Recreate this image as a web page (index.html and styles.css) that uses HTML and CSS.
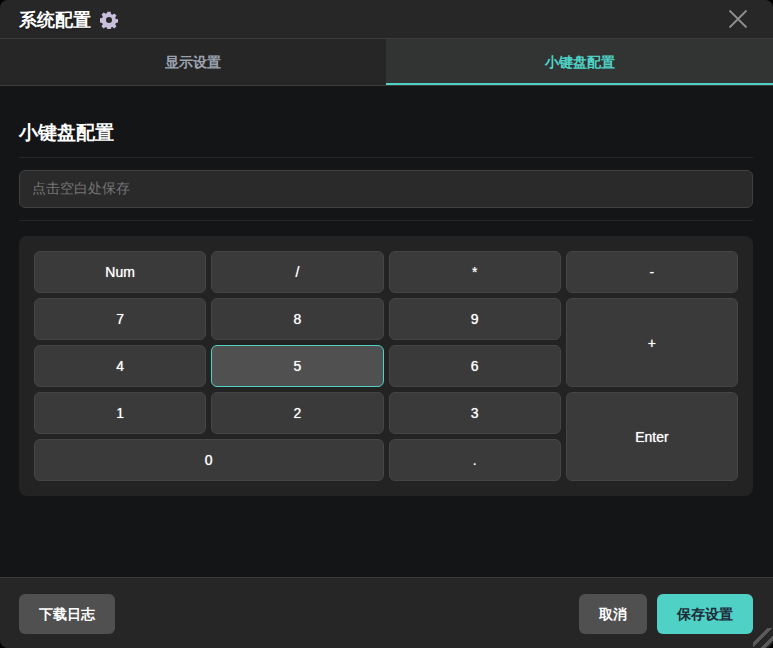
FILE: index.html
```html
<!DOCTYPE html>
<html lang="zh">
<head>
<meta charset="utf-8">
<title>系统配置</title>
<link rel="stylesheet" href="styles.css">
</head>
<body>
<div class="dialog">
  <header class="head">
    <h1 class="title">系统配置
      <svg class="gear" width="18" height="18" viewBox="0 0 18 18"><path fill="#c9bfdc" fill-rule="evenodd" d="M7.4.8h3.2l.4 2.3 1.3.6 2-1.3 2.2 2.2-1.3 2 .6 1.3 2.3.4v3.2l-2.3.4-.6 1.3 1.3 2-2.2 2.2-2-1.3-1.3.6-.4 2.3H7.4l-.4-2.3-1.3-.6-2 1.3-2.2-2.2 1.3-2-.6-1.3-2.3-.4V7.3l2.3-.4.6-1.3-1.3-2 2.2-2.2 2 1.3 1.3-.6zM9 6a3 3 0 1 0 0 6 3 3 0 0 0 0-6z"/></svg>
    </h1>
    <svg class="close" width="20" height="20" viewBox="0 0 20 20"><path d="M1.5 1.5 18.5 18.5M18.5 1.5 1.5 18.5" stroke="#8e8e8e" stroke-width="1.8" fill="none"/></svg>
  </header>
  <nav class="tabs">
    <div class="tab">显示设置</div>
    <div class="tab active">小键盘配置</div>
  </nav>
  <main class="body">
    <h2 class="section">小键盘配置</h2>
    <div class="inputwrap"><input class="input" placeholder="点击空白处保存"></div>
    <div class="pad">
      <button class="key">Num</button>
      <button class="key">/</button>
      <button class="key">*</button>
      <button class="key">-</button>
      <button class="key">7</button>
      <button class="key">8</button>
      <button class="key">9</button>
      <button class="key tall">+</button>
      <button class="key">4</button>
      <button class="key sel">5</button>
      <button class="key">6</button>
      <button class="key">1</button>
      <button class="key">2</button>
      <button class="key">3</button>
      <button class="key tall">Enter</button>
      <button class="key wide">0</button>
      <button class="key">.</button>
    </div>
  </main>
  <footer class="foot">
    <button class="btn">下载日志</button>
    <div class="right">
      <button class="btn cancel">取消</button>
      <button class="btn save">保存设置</button>
    </div>
  </footer>
  <div class="grip"></div>
</div>
</body>
</html>
```
FILE: styles.css
```css
* { box-sizing: border-box; }
html, body { margin: 0; padding: 0; background: #000; }
body { width: 773px; height: 648px; overflow: hidden; font-family: "Liberation Sans", sans-serif; }
.dialog { position: relative; width: 773px; height: 648px; display: flex; flex-direction: column; background: #141517; border-radius: 8px; overflow: hidden; color: #fff; }
.head { height: 39px; flex: none; display: flex; align-items: center; justify-content: space-between; padding: 3px 25px 1px 19px; background: #272727; border-bottom: 1px solid #3c3c3c; }
.title { margin: 0; font-size: 18px; line-height: 24px; font-weight: 700; color: #fff; display: flex; align-items: center; gap: 9px; text-shadow: 0 1px 2px rgba(0,0,0,.5); }
.gear { display: block; }
.close { margin-top: -2px; }
.tabs { height: 47px; flex: none; display: flex; background: #262626; border-bottom: 1px solid #3c3c3c; }
.tab { flex: 0 0 386px; display: flex; align-items: center; justify-content: center; font-size: 14px; font-weight: 700; color: #9ca3af; padding-top: 2px; }
.tab.active { flex: 1; color: #4fd1c5; background: #323434; border-bottom: 2px solid #4fd1c5; padding-top: 4px; }
.body { flex: 1; padding: 35px 20px 0 19px; display: flex; flex-direction: column; }
.section { margin: 0; padding-bottom: 12px; font-size: 18.6px; line-height: 24px; font-weight: 700; color: #fff; border-bottom: 1px solid #26272a; }
.inputwrap { padding: 12px 0; border-bottom: 1px solid #26272a; }
.input { display: block; width: 100%; height: 38px; padding: 0 12px 2px; background: #2a2a2a; border: 1px solid #404040; border-radius: 6px; color: #fff; font-family: "Liberation Sans", sans-serif; font-size: 14px; outline: none; }
.input::placeholder { color: #757575; opacity: 1; }
.pad { margin-top: 15px; padding: 15px; height: 260px; background: #232323; border-radius: 8px; display: grid; grid-template-columns: repeat(4, 172.25px); grid-template-rows: repeat(5, 42px); gap: 5px; }
.key { background: #3a3a3a; border: 1px solid #454545; border-radius: 6px; color: #fff; font-family: "Liberation Sans", sans-serif; font-size: 14px; font-weight: 400; padding: 0; text-shadow: 0 0 1px rgba(255,255,255,.8); }
.key.tall { grid-row: span 2; }
.key.wide { grid-column: span 2; }
.key.sel { background: #505050; border-color: #4fd1c5; }
.foot { height: 71px; flex: none; display: flex; align-items: center; justify-content: space-between; padding: 2px 20px 0 19px; background: #262626; border-top: 1px solid #3c3c3c; }
.right { display: flex; gap: 10px; }
.btn { height: 40px; padding: 2px 20px 0; border: 0; border-radius: 6px; background: #505050; color: #fff; font-family: "Liberation Sans", sans-serif; font-size: 14px; font-weight: 700; }
.save { background: #4fd1c5; color: #1f2937; width: 96px; }
.grip { position: absolute; right: 0; bottom: 0; width: 20px; height: 20px; background: linear-gradient(135deg, transparent 0 36%, #5a5a5a 36% 49%, transparent 49% 69%, #5a5a5a 69% 81%, transparent 81%); }
```
